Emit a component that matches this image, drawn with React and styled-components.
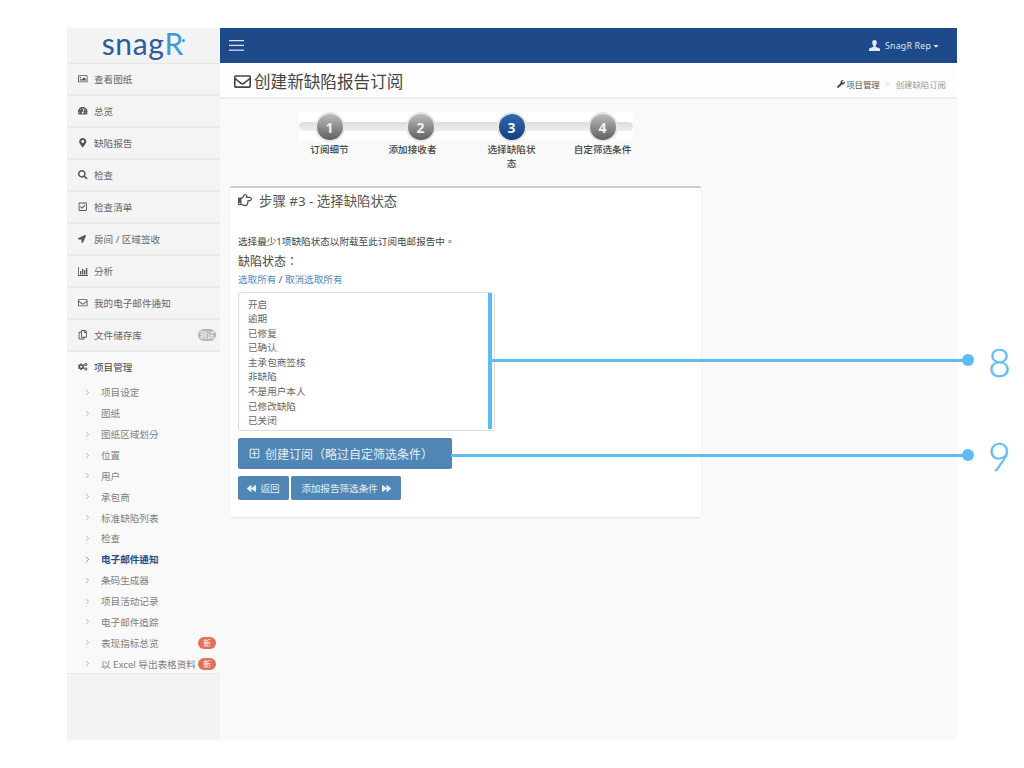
import React from 'react';
import styled, { createGlobalStyle } from 'styled-components';
import {
  FaRegImage, FaTachometerAlt, FaMapMarkerAlt, FaSearch, FaRegCheckSquare, FaLocationArrow,
  FaRegEnvelope, FaRegCopy, FaCogs, FaCaretDown, FaWrench,
  FaRegHandPointRight, FaRegPlusSquare, FaBackward, FaForward,
} from 'react-icons/fa';
import { ChevronRight } from 'lucide-react';

const Global = createGlobalStyle`
  html, body { margin: 0; padding: 0; background: #fff; }
  body { font-family: "Noto Sans", "Noto Sans CJK TC", sans-serif; color: #555; }
  * { box-sizing: border-box; }
`;

const Frame = styled.div`
  position: relative;
  width: 890px; height: 712px; margin: 28px 0 0 67px;
  display: flex; background: #f9f9f9;
`;
const Sidebar = styled.aside`
  width: 153px; flex: none; background: #f3f3f3;
  display: flex; flex-direction: column;
`;
const Logo = styled.div`
  height: 36px; display: flex; justify-content: center; align-items: center;
  border-bottom: 1px solid #e6e6e6; padding: 0 0 5px 0;
  font-family: "Lato", sans-serif; font-size: 30px; line-height: 30px; letter-spacing: .6px; color: #2a5c9e;
  b { font-weight: 400; color: #3a9bd8; letter-spacing: 0; }
  i { width: 3px; height: 3px; border-radius: 50%; background: #3a9bd8; margin: 0 0 6px -1px; }
`;
const MenuRow = styled.div`
  height: ${p => (p.$dark ? '30px' : '32px')}; display: flex; align-items: center; padding-left: 11px; padding-right: 4px;
  border-bottom: ${p => (p.$dark ? '0' : '2px solid #e9e9e9')}; font-size: 9.6px;
  color: ${p => (p.$dark ? '#444' : '#666')};
  background: ${p => (p.$dark ? '#f9f9f9' : '#f4f4f4')};
`;
const MenuIcon = styled.span`
  width: 16px; flex: none; display: flex; align-items: center; font-size: ${p => p.$size || 9.5}px; color: #555;
  svg { display: block; }
`;
const Grow = styled.span`flex: 1; white-space: nowrap;`;
const Badge = styled.span`
  width: 18px; height: 12px; border-radius: 6px; font-size: 7.5px; line-height: 12px; color: #fff; text-align: center;
  background: ${p => p.$bg}; flex: none;
`;
const SubMenu = styled.div`
  background: #f9f9f9; border-bottom: 1px solid #e8e8e8; padding: 0 4px 0 16px; height: 292px;
`;
const SubRow = styled.div`
  height: 20.86px; display: flex; align-items: center; font-size: 9.6px; white-space: nowrap;
  color: ${p => (p.$active ? '#204d8c' : '#808080')};
  font-weight: ${p => (p.$active ? 700 : 400)};
`;
const SubArrow = styled.span`
  width: 18px; flex: none; display: flex;
  color: ${p => (p.$active ? '#204d8c' : '#888')};
`;
const Main = styled.main`flex: 1; display: flex; flex-direction: column; min-width: 0;`;
const TopBar = styled.header`
  height: 35px; background: #1f4a8a; color: #dfe7f2; display: flex; align-items: center;
  justify-content: space-between; padding: 0 17px 0 9px; flex: none;
`;
const UserMenu = styled.div`
  display: flex; align-items: center; font-size: 8.8px; gap: 5px; letter-spacing: .2px;
  svg:last-child { margin-left: -4px; }
`;
const TitleBar = styled.div`
  height: 36px; background: #fdfdfd; border-bottom: 2px solid #eee; flex: none;
  display: flex; align-items: center; justify-content: space-between; padding: 2px 11px 0 14px;
`;
const PageTitle = styled.h1`
  margin: 0; display: flex; align-items: center; gap: 3px; font-size: 16.6px; font-weight: 400; color: #444;
`;
const Crumbs = styled.div`
  display: flex; align-items: center; font-size: 8.4px; color: #999; padding-top: 6px;
  strong { font-weight: 400; color: #555; margin-left: 1px; }
  em { font-style: normal; color: #ccc; margin: 0 6px; font-size: 7px; }
`;
const Content = styled.div`padding: 13px 10px 0; flex: 1;`;
const Wizard = styled.div`display: flex; margin-left: 54px; width: 364px; position: relative; height: 74px;`;
const Rail = styled.div`
  position: absolute; left: 15px; top: 0; width: 334px; height: 29px; background: #fff;
  &::after {
    content: ''; position: absolute; left: 0; right: 0; top: 10px; height: 9px;
    background: linear-gradient(#dcdcdc, #eee); border-radius: 4.5px;
  }
`;
const Step = styled.div`
  width: 91px; position: relative; display: flex; flex-direction: column; align-items: center;
`;
const Circle = styled.div`
  width: 30px; height: 30px; border-radius: 50%; border: 2px solid #e6e6e6;
  display: flex; align-items: center; justify-content: center;
  color: #f2f2f2; font-size: 14px; font-weight: 700;
  background: ${p => (p.$on ? 'linear-gradient(#2f6bb0, #173f7c)' : 'linear-gradient(#bdbdbd, #5f5f5f)')};
`;
const StepLabel = styled.div`
  width: ${p => p.$w || 75}px; margin-top: 1px; margin-left: ${p => p.$shift || 0}px;
  font-size: 9.6px; line-height: 14px; font-weight: 500; color: #444; text-align: center; white-space: normal;
`;
const Panel = styled.section`
  width: 471px; height: 331px; background: #fff; border-top: 2px solid #ccc; border-radius: 2px;
  box-shadow: 0 1px 2px rgba(0,0,0,.08); padding: 0 8px;
`;
const PanelTitle = styled.h2`
  margin: 0; height: 24px; display: flex; align-items: center; gap: 7px; font-size: 13.4px;
  font-weight: 400; color: #555;
`;
const Intro = styled.p`margin: 23px 0 0; font-size: 9.6px; line-height: 14px; color: #444;`;
const FieldLabel = styled.div`margin-top: 4px; font-size: 12px; line-height: 17px; color: #444;`;
const Links = styled.div`
  margin-top: 3px; font-size: 9.6px; line-height: 14px; color: #555;
  a { color: #4f90c6; text-decoration: none; }
`;
const ListBox = styled.div`
  position: relative; margin-top: 5px; width: 257px; height: 139px; border: 1px solid #ddd;
  border-radius: 3px; padding: 4.5px 9px; font-size: 9.6px; color: #666;
`;
const ListItem = styled.div`height: 14.6px; line-height: 14.6px;`;
const Scroll = styled.div`
  position: absolute; right: 2px; top: 0; bottom: 1px; width: 4px; background: #5cbcf6;
`;
const PrimaryButton = styled.button`
  display: flex; align-items: center; gap: 5px; margin-top: 7px; width: 214px; height: 31px;
  padding: 0 0 0 11px; border: 0; border-radius: 2px; background: #4f86b5; color: #e6eef5;
  font: inherit; font-size: 12px; white-space: nowrap;
`;
const ButtonRow = styled.div`display: flex; gap: 2px; margin-top: 7px;`;
const SmallButton = styled.button`
  display: flex; align-items: center; justify-content: center; gap: 4px; height: 24px;
  width: ${p => p.$w}px; padding: 0; border: 0; border-radius: 2px; background: #4f86b5; color: #e6eef5;
  font: inherit; font-size: 9.6px; white-space: nowrap;
`;
const Callout = styled.div`
  position: absolute; left: ${p => p.$x}px; top: ${p => p.$y}px; width: ${p => p.$w}px; height: 3px;
  background: #5cbcf6;
  &::after {
    content: ''; position: absolute; right: -6px; top: -5px; width: 12px; height: 12px;
    border-radius: 50%; background: #5cbcf6;
  }
`;
const CalloutNum = styled.div`
  position: absolute; left: 921px; top: ${p => p.$y}px; font-family: "Lato", sans-serif; font-weight: 300;
  font-size: 39px; line-height: 40px; color: #5cbcf6; -webkit-text-stroke: .4px #5cbcf6;
`;

const menu = [
  [FaRegImage, '查看图纸'], [FaTachometerAlt, '总览'], [FaMapMarkerAlt, '缺陷报告'], [FaSearch, '检查'],
  [FaRegCheckSquare, '检查清单'], [FaLocationArrow, '房间 / 区域签收', 8],
];
const sub = ['项目设定', '图纸', '图纸区域划分', '位置', '用户', '承包商', '标准缺陷列表', '检查', '电子邮件通知',
  '条码生成器', '项目活动记录', '电子邮件追踪', '表现指标总览', '以 Excel 导出表格资料'];
const states = ['开启', '逾期', '已修复', '已确认', '主承包商签核', '非缺陷', '不是用户本人', '已修改缺陷', '已关闭'];
const steps = [
  { n: 1, label: '订阅细节' },
  { n: 2, label: '添加接收者', shift: -16 },
  { n: 3, label: '选择缺陷状态', w: 50, on: true },
  { n: 4, label: '自定筛选条件', w: 62 },
];

const BarsGlyph = () => (
  <svg width="10" height="9" viewBox="0 0 10 9" fill="#555">
    <path d="M0 0h.8v8H10v1H0z" /><rect x="2" y="4" width="1.3" height="3.5" /><rect x="4" y="2" width="1.3" height="5.5" />
    <rect x="6" y="3" width="1.3" height="4.5" /><rect x="8" y="1" width="1.3" height="6.5" />
  </svg>
);
const Hamburger = () => (
  <svg width="15" height="11" viewBox="0 0 15 11" fill="#dfe7f2">
    <rect width="15" height="1.2" y="0" /><rect width="15" height="1.2" y="4.8" /><rect width="15" height="1.2" y="9.6" />
  </svg>
);
const UserGlyph = () => (
  <svg width="11" height="11" viewBox="0 0 11 11" fill="#dfe7f2">
    <path d="M5.5 0C4 0 3.2 1 3.2 2.6c0 1.3.6 2.6 1.2 3.2v1L.6 8.3C.2 8.5 0 8.9 0 9.3V11h11V9.3c0-.4-.2-.8-.6-1L6.6 6.8v-1c.6-.6 1.2-1.9 1.2-3.2C7.8 1 7 0 5.5 0z" />
  </svg>
);

export default function App() {
  return (
    <>
      <Global />
      <Frame>
        <Sidebar>
          <Logo>snag<b>R</b><i /></Logo>
          {menu.map(([I, t, size]) => (
            <MenuRow key={t}><MenuIcon $size={size}><I /></MenuIcon><Grow>{t}</Grow></MenuRow>
          ))}
          <MenuRow><MenuIcon><BarsGlyph /></MenuIcon><Grow>分析</Grow></MenuRow>
          <MenuRow><MenuIcon><FaRegEnvelope /></MenuIcon><Grow>我的电子邮件通知</Grow></MenuRow>
          <MenuRow><MenuIcon><FaRegCopy /></MenuIcon><Grow>文件储存库</Grow><Badge $bg="#b5b5b5">测试</Badge></MenuRow>
          <MenuRow $dark><MenuIcon><FaCogs /></MenuIcon><Grow>项目管理</Grow></MenuRow>
          <SubMenu>
            {sub.map(t => {
              const active = t === '电子邮件通知';
              return (
                <SubRow key={t} $active={active}>
                  <SubArrow $active={active}><ChevronRight size={9} strokeWidth={1.6} /></SubArrow>
                  <Grow>{t}</Grow>
                  {(t === '表现指标总览' || t.startsWith('以 Excel')) && <Badge $bg="#e2705c">新</Badge>}
                </SubRow>
              );
            })}
          </SubMenu>
        </Sidebar>
        <Main>
          <TopBar>
            <Hamburger />
            <UserMenu><UserGlyph /> SnagR Rep <FaCaretDown size={8} /></UserMenu>
          </TopBar>
          <TitleBar>
            <PageTitle><FaRegEnvelope size={17} />创建新缺陷报告订阅</PageTitle>
            <Crumbs><FaWrench size={8} color="#444" /><strong>项目管理</strong><em>&gt;</em>创建缺陷订阅</Crumbs>
          </TitleBar>
          <Content>
            <Wizard>
              <Rail />
              {steps.map(s => (
                <Step key={s.n}>
                  <Circle $on={s.on}>{s.n}</Circle>
                  <StepLabel $w={s.w} $shift={s.shift}>{s.label}</StepLabel>
                </Step>
              ))}
            </Wizard>
            <Panel>
              <PanelTitle><FaRegHandPointRight size={14} />步骤 #3 - 选择缺陷状态</PanelTitle>
              <Intro>选择最少1项缺陷状态以附载至此订阅电邮报告中。</Intro>
              <FieldLabel>缺陷状态：</FieldLabel>
              <Links><a>选取所有</a> / <a>取消选取所有</a></Links>
              <ListBox>
                {states.map(s => <ListItem key={s}>{s}</ListItem>)}
                <Scroll />
              </ListBox>
              <PrimaryButton><FaRegPlusSquare size={11} />创建订阅（略过自定筛选条件）</PrimaryButton>
              <ButtonRow>
                <SmallButton $w={51}><FaBackward size={9} />返回</SmallButton>
                <SmallButton $w={110}>添加报告筛选条件<FaForward size={9} /></SmallButton>
              </ButtonRow>
            </Panel>
          </Content>
        </Main>
        <Callout $x={425} $y={331} $w={476} />
        <Callout $x={384} $y={426} $w={517} />
        <CalloutNum $y={314}>8</CalloutNum>
        <CalloutNum $y={408}>9</CalloutNum>
      </Frame>
    </>
  );
}
